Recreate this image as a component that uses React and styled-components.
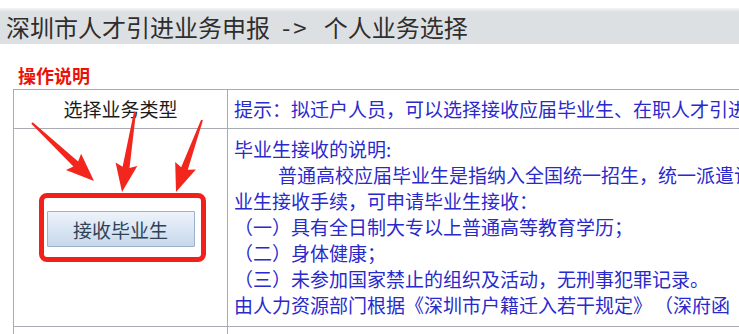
import React from "react";
import styled, { createGlobalStyle } from "styled-components";

const Global = createGlobalStyle`
  html, body {
    margin: 0;
    padding: 0;
    background: #ffffff;
    overflow: hidden;
  }
  body {
    font-family: "Noto Sans CJK SC", "Microsoft YaHei", "Noto Sans", sans-serif;
  }
`;

const Page = styled.div`
  position: relative;
  width: 739px;
  height: 334px;
  overflow: hidden;
`;

const TitleBar = styled.div`
  margin-top: 8px;
  height: 36px;
  display: flex;
  align-items: center;
  padding-left: 6px;
  background: linear-gradient(#f3f4f5 0px, #dde0e3 4px, #dde0e3 100%);
  font-size: 24px;
  color: #2e2e2e;
  white-space: nowrap;
`;

const Sep = styled.span`
  margin: 0 14px 0 12px;
  letter-spacing: 3px;
`;

const SectionLabel = styled.div`
  margin: 18px 0 1px 18px;
  height: 26px;
  line-height: 26px;
  font-size: 18px;
  font-weight: 700;
  color: #ea130c;
`;

const Table = styled.table`
  margin-left: 13px;
  width: 1100px;
  border-collapse: collapse;
  table-layout: fixed;
  font-size: 19px;
`;

const Cell = styled.td`
  border: 1px solid #a9abb3;
  padding: ${(p) => p.$pad || "0"};
  vertical-align: ${(p) => p.$valign || "middle"};
  text-align: ${(p) => (p.$center ? "center" : "left")};
  color: ${(p) => (p.$blue ? "#2a2acc" : "#1c1c1c")};
  height: ${(p) => p.$h || "auto"};
  white-space: nowrap;
  overflow: hidden;
  line-height: 26px;
`;

const Line = styled.div`
  height: 26px;
  line-height: 26px;
  padding-left: ${(p) => p.$indent || 0}px;
  white-space: nowrap;
`;

const Gap = styled.span`
  display: inline-block;
  width: ${(p) => p.$w}px;
`;

const ButtonArea = styled.div`
  display: flex;
  justify-content: center;
  padding-top: 82px;
`;

const Marked = styled.div`
  position: relative;
  display: inline-block;
`;

const Highlight = styled.div`
  position: absolute;
  top: -18px;
  left: -8px;
  right: -11px;
  bottom: -15px;
  border: 5px solid #f2201a;
  border-radius: 8px;
  pointer-events: none;
`;

const ActionButton = styled.button`
  width: 148px;
  height: 36px;
  border: 1px solid #9db1ca;
  border-radius: 1px;
  background: linear-gradient(#eef3fa 0%, #dce7f4 45%, #c6d7eb 100%);
  color: #2f4256;
  font-family: "Noto Sans CJK SC", "Microsoft YaHei", sans-serif;
  font-size: 19px;
  padding: 0;
  display: flex;
  align-items: center;
  justify-content: center;
  cursor: pointer;
`;

const Overlay = styled.svg`
  position: absolute;
  top: 0;
  left: 0;
  pointer-events: none;
`;

function arrowPoints(tail, tip) {
  const [x1, y1] = tail;
  const [x2, y2] = tip;
  const dx = x2 - x1;
  const dy = y2 - y1;
  const L = Math.hypot(dx, dy);
  const ux = dx / L;
  const uy = dy / L;
  const nx = -uy;
  const ny = ux;
  const head = 25;
  const bx = x2 - ux * head;
  const by = y2 - uy * head;
  const wx = bx - ux * 3;
  const wy = by - uy * 3;
  const pts = [
    [x1 + nx * 1, y1 + ny * 1],
    [bx + nx * 3.5, by + ny * 3.5],
    [wx + nx * 11, wy + ny * 11],
    [x2, y2],
    [wx - nx * 11, wy - ny * 11],
    [bx - nx * 3.5, by - ny * 3.5],
    [x1 - nx * 1, y1 - ny * 1],
  ];
  return pts.map((p) => p.map((v) => v.toFixed(1)).join(",")).join(" ");
}

const arrows = [
  [[32, 123], [94, 181]],
  [[135, 112], [122, 192]],
  [[202, 120], [176, 192]],
];

export default function App() {
  return (
    <>
      <Global />
      <Page>
        <TitleBar>
          深圳市人才引进业务申报<Sep>-&gt;</Sep>个人业务选择
        </TitleBar>
        <SectionLabel>操作说明</SectionLabel>
        <Table>
          <colgroup>
            <col style={{ width: "214px" }} />
            <col />
          </colgroup>
          <tbody>
            <tr>
              <Cell $center $h="38px">选择业务类型</Cell>
              <Cell $blue $pad="0 0 0 6px">
                提示：拟迁户人员，可以选择接收应届毕业生、在职人才引进、留学人员引进等业务类型进行申报。
              </Cell>
            </tr>
            <tr>
              <Cell $valign="top" $h="190px">
                <ButtonArea>
                  <Marked>
                    <ActionButton type="button">接收毕业生</ActionButton>
                    <Highlight />
                  </Marked>
                </ButtonArea>
              </Cell>
              <Cell $blue $valign="top" $pad="7px 0 0 6px" $h="190px">
                <Line>毕业生接收的说明:</Line>
                <Line $indent={44}>
                  普通高校应届毕业生是指纳入全国统一招生，统一派遣计划内的应届毕
                </Line>
                <Line>业生接收手续，可申请毕业生接收：</Line>
                <Line>（一）具有全日制大专以上普通高等教育学历；</Line>
                <Line>（二）身体健康；</Line>
                <Line>（三）未参加国家禁止的组织及活动，无刑事犯罪记录。</Line>
                <Line>
                  由人力资源部门根据《深圳市户籍迁入若干规定》<Gap $w={2} />（深府函〔2016〕329号）
                </Line>
              </Cell>
            </tr>
            <tr>
              <Cell $h="40px" />
              <Cell $h="40px" />
            </tr>
          </tbody>
        </Table>
        <Overlay width="739" height="334" viewBox="0 0 739 334">
          {arrows.map(([a, b], i) => (
            <polygon key={i} points={arrowPoints(a, b)} fill="#f2261c" />
          ))}
        </Overlay>
      </Page>
    </>
  );
}
